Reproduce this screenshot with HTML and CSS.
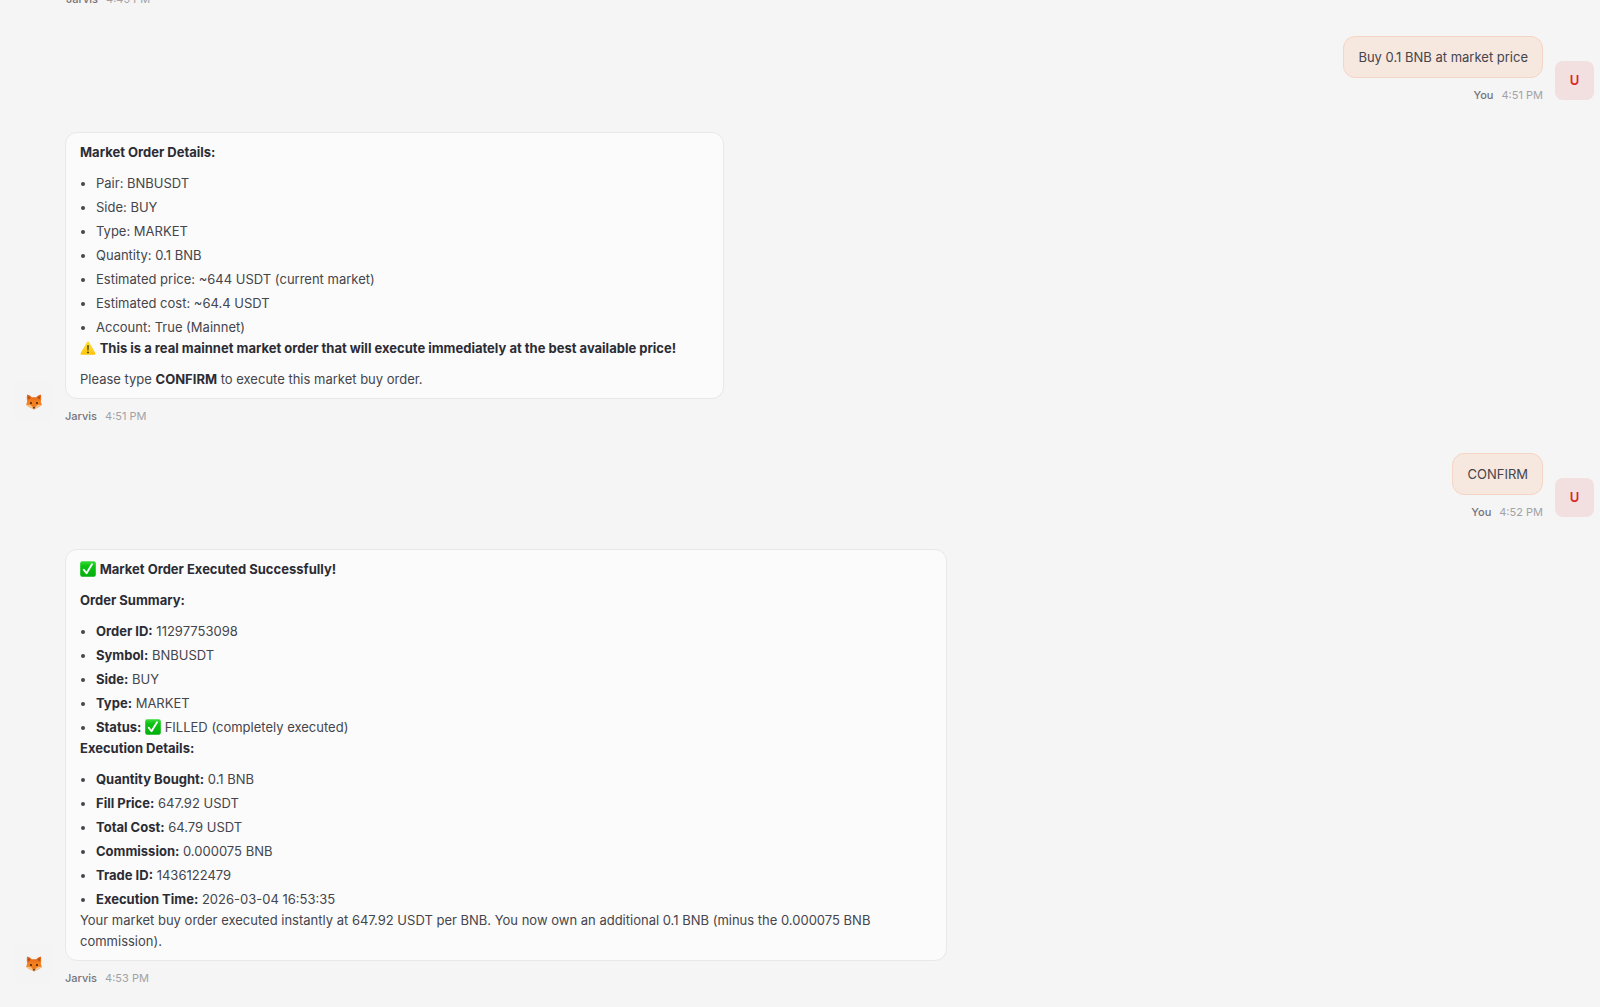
FILE: index.html
```
<!DOCTYPE html>
<html lang="en">
<head>
<meta charset="utf-8">
<title>Jarvis - Chat</title>
<link rel="stylesheet" href="styles.css">
</head>
<body>

<!-- emoji shapes -->
<svg class="defs" aria-hidden="true">
<defs>
<linearGradient id="foxg" x1="0" y1="0" x2="0" y2="1"><stop offset="0" stop-color="#e0601c"/><stop offset=".5" stop-color="#f5821f"/><stop offset="1" stop-color="#e8741a"/></linearGradient>
<linearGradient id="okg" x1="0" y1="0" x2="0" y2="1"><stop offset="0" stop-color="#3bdc3a"/><stop offset=".3" stop-color="#0cc314"/><stop offset="1" stop-color="#04ae0c"/></linearGradient>
<linearGradient id="wg" x1="0" y1="0" x2="0" y2="1"><stop offset="0" stop-color="#ffe03a"/><stop offset="1" stop-color="#fdc50b"/></linearGradient>
</defs>
<symbol id="fox" viewBox="0 0 16 16">
<path fill="url(#foxg)" d="M1.200.6C2.900 1 4.600 2 5.700 3.200h4.600C11.400 2 13.100 1 14.800.6c.6 2.400.5 4.900 0 6.700l1 3.800-2.400 1.700-2.600 1.300L8 15.600 5.200 14.100l-2.600-1.300L.2 11.100l1-3.800C.7 5.500.6 3 1.200.6z"/>
<path fill="#a04a18" d="M2.200 2.200c.9.300 1.600.9 2.100 1.600L2.600 5.500C2.200 4.500 2.100 3.300 2.200 2.200zM13.800 2.200c-.9.300-1.600.9-2.100 1.600l1.700 1.700c.4-1 .5-2.200.4-3.300z"/>
<path fill="#f3c58c" d="M.6 11.200c1.700-.8 3.600-.5 4.900.5l1.500 1.900h2l1.500-1.900c1.300-1 3.200-1.300 4.900-.5-1.500 1.500-3.100 2.200-4.600 2.900L8 15.600l-2.800-1.500C3.700 13.400 2.100 12.700.6 11.200z"/>
<ellipse cx="5" cy="9" rx=".9" ry="1.100" fill="#2b1710"/><ellipse cx="11" cy="9" rx=".9" ry="1.100" fill="#2b1710"/>
<path fill="#2b1710" d="M6.700 13.200h2.600L8 15.100z"/>
</symbol>
<symbol id="ok" viewBox="0 0 16 16">
<rect x=".2" y=".2" width="15.600" height="15.600" rx="2" fill="url(#okg)"/>
<path fill="none" stroke="#fff" stroke-width="1.900" stroke-linecap="round" stroke-linejoin="round" d="M3.800 8.700l2.700 3.600 5.500-9"/>
</symbol>
<symbol id="warn" viewBox="0 0 16 16">
<path fill="url(#wg)" d="M8 1.200c.5 0 .8.300 1 .7l6.300 11.200c.5.900.1 1.700-.9 1.700H1.600c-1 0-1.400-.8-.9-1.700L7 1.900c.2-.4.500-.7 1-.7z"/>
<path fill="#3a3320" d="M7.200 5.300h1.600l-.3 5.200h-1z"/><circle cx="8" cy="12.400" r=".9" fill="#3a3320"/>
</symbol>
</svg>

<main class="chat">

<div class="group">
	<div class="msgs">
		<div class="meta"><span class="name">Jarvis</span><time>4:49 PM</time></div>
	</div>
</div>

<div class="group user">
	<div class="msgs">
		<div class="bubble">Buy 0.1 BNB at market price</div>
		<div class="meta"><span class="name">You</span><time>4:51 PM</time></div>
	</div>
	<div class="avatar">U</div>
</div>

<div class="group">
	<div class="avatar"><svg role="img" aria-label="Jarvis"><use href="#fox"/></svg></div>
	<div class="msgs">
		<div class="bubble medium">
			<p><strong>Market Order Details:</strong></p>
			<ul>
				<li>Pair: BNBUSDT</li>
				<li>Side: BUY</li>
				<li>Type: MARKET</li>
				<li>Quantity: 0.1 BNB</li>
				<li>Estimated price: ~644 USDT (current market)</li>
				<li>Estimated cost: ~64.4 USDT</li>
				<li>Account: True (Mainnet)</li>
			</ul>
			<p><svg class="emoji" aria-hidden="true"><use href="#warn"/></svg> <strong>This is a real mainnet market order that will execute immediately at the best available price!</strong></p>
			<p>Please type <strong>CONFIRM</strong> to execute this market buy order.</p>
		</div>
		<div class="meta"><span class="name">Jarvis</span><time>4:51 PM</time></div>
	</div>
</div>

<div class="group user">
	<div class="msgs">
		<div class="bubble">CONFIRM</div>
		<div class="meta"><span class="name">You</span><time>4:52 PM</time></div>
	</div>
	<div class="avatar">U</div>
</div>

<div class="group">
	<div class="avatar"><svg role="img" aria-label="Jarvis"><use href="#fox"/></svg></div>
	<div class="msgs">
		<div class="bubble wide">
			<p><svg class="emoji" aria-hidden="true"><use href="#ok"/></svg> <strong>Market Order Executed Successfully!</strong></p>
			<p><strong>Order Summary:</strong></p>
			<ul>
				<li><strong>Order ID:</strong> 11297753098</li>
				<li><strong>Symbol:</strong> BNBUSDT</li>
				<li><strong>Side:</strong> BUY</li>
				<li><strong>Type:</strong> MARKET</li>
				<li><strong>Status:</strong> <svg class="emoji" aria-hidden="true"><use href="#ok"/></svg> FILLED (completely executed)</li>
			</ul>
			<p><strong>Execution Details:</strong></p>
			<ul>
				<li><strong>Quantity Bought:</strong> 0.1 BNB</li>
				<li><strong>Fill Price:</strong> 647.92 USDT</li>
				<li><strong>Total Cost:</strong> 64.79 USDT</li>
				<li><strong>Commission:</strong> 0.000075 BNB</li>
				<li><strong>Trade ID:</strong> 1436122479</li>
				<li><strong>Execution Time:</strong> 2026-03-04 16:53:35</li>
			</ul>
			<p>Your market buy order executed instantly at 647.92 USDT per BNB. You now own an additional 0.1 BNB (minus the 0.000075 BNB commission).</p>
		</div>
		<div class="meta"><span class="name">Jarvis</span><time>4:53 PM</time></div>
	</div>
</div>

</main>
</body>
</html>
```
FILE: styles.css
```
* {
	box-sizing: border-box;
}
html, body {
	height: 100%;
	margin: 0;
}
body {
	background: #f5f5f5;
	color: #45454c;
	font-family: Inter, "Liberation Sans", sans-serif;
	font-size: 13px;
	line-height: 21px;
	overflow: hidden;
}
.defs {
	position: absolute;
	width: 0;
	height: 0;
}
.chat {
	padding: 0 6px 0 14px;
	margin-top: -18px;
}
.group {
	display: flex;
	align-items: flex-end;
	gap: 12px;
	margin-bottom: 28px;
}
.group:first-child {
	padding-left: 52px;
}
.user {
	justify-content: flex-end;
}
.msgs {
	display: flex;
	flex-direction: column;
	align-items: flex-start;
	flex: 1;
}
.user .msgs {
	align-items: flex-end;
}
.bubble {
	padding: 9px 14px 8px;
	border: 1px solid #e8e8e9;
	border-radius: 12px;
	background: #fbfbfb;
}
.user .bubble {
	padding: 10px 14px 9px;
	background: #f6e7df;
	border-color: #f5d5c3;
}
.medium {
	width: 43.1%;
}
.wide {
	width: 57.7%;
	padding-right: 24px;
}
.bubble p {
	margin: 0;
}
.bubble p + p, .bubble p + ul {
	margin-top: 10px;
}
.bubble ul {
	margin: 0;
	padding-left: 16px;
}
.bubble li + li {
	margin-top: 3px;
}
strong {
	color: #2c2c35;
	font-weight: 700;
}
.emoji {
	width: 16px;
	height: 16px;
	vertical-align: -3px;
}
.meta {
	display: flex;
	gap: 8px;
	margin-top: 8px;
	font-size: 11px;
	line-height: 18px;
	color: #a2a2a6;
}
.name {
	font-weight: 500;
	color: #73737a;
}
.avatar {
	display: flex;
	align-items: center;
	justify-content: center;
	width: 39px;
	height: 39px;
	margin-bottom: 4px;
	border-radius: 8px;
	background: #f4f4f4;
}
.avatar svg {
	width: 16px;
	height: 16px;
}
.user .avatar {
	background: #f2dfdf;
	color: #dc2626;
	font-weight: 600;
}
```
